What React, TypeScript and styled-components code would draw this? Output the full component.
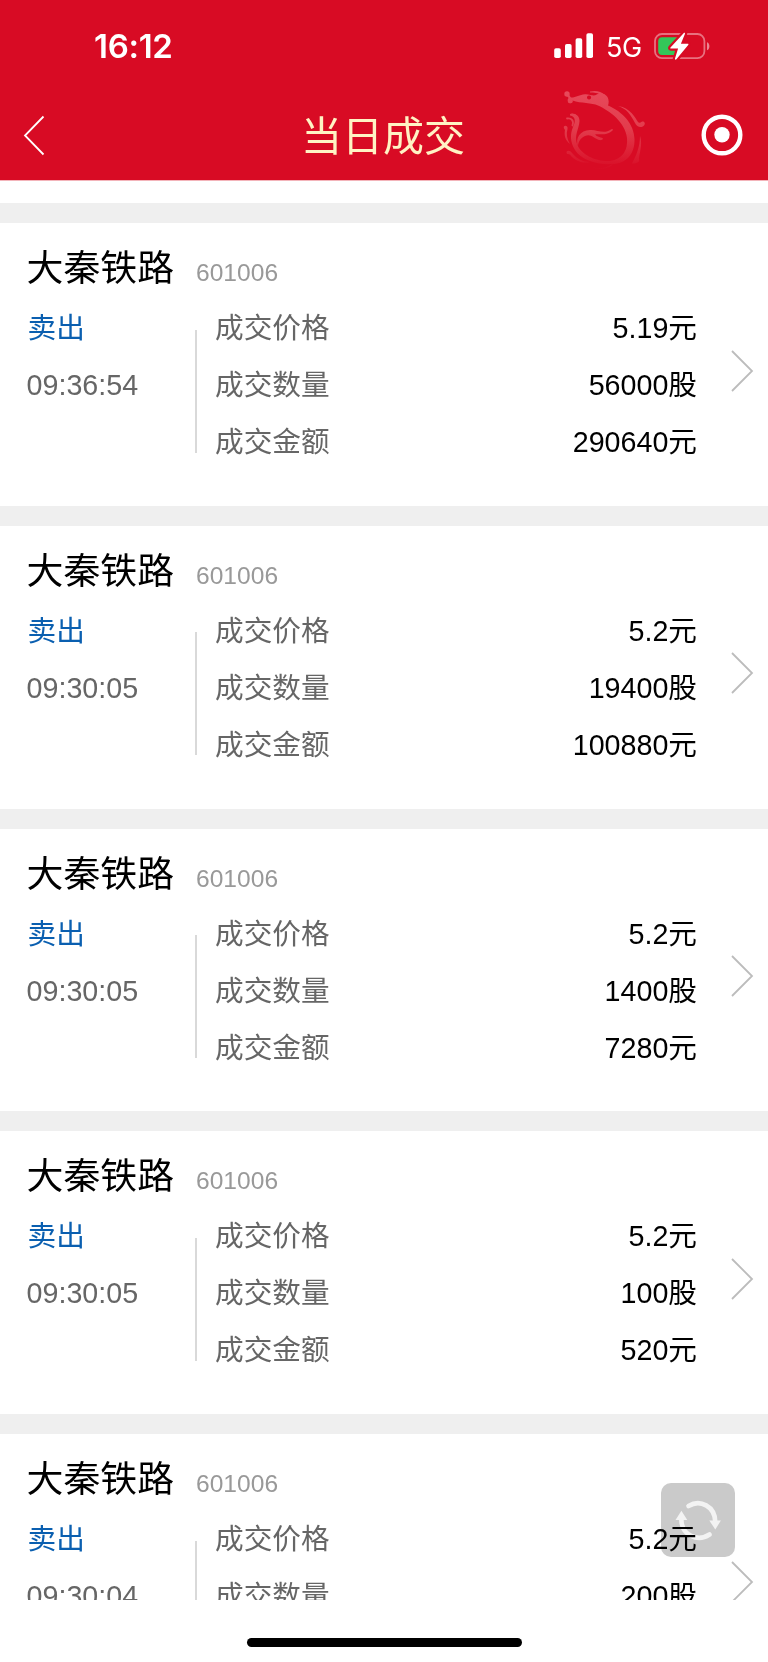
import { createGlobalStyle, styled } from "styled-components";

type Trade = {
  id: number;
  name: string;
  code: string;
  side: string;
  time: string;
  price: string;
  quantity: string;
  amount: string;
};

const stock = { name: "大秦铁路", code: "601006", side: "卖出" };

const trades: Trade[] = [
  { id: 1, ...stock, time: "09:36:54", price: "5.19", quantity: "56000", amount: "290640" },
  { id: 2, ...stock, time: "09:30:05", price: "5.2", quantity: "19400", amount: "100880" },
  { id: 3, ...stock, time: "09:30:05", price: "5.2", quantity: "1400", amount: "7280" },
  { id: 4, ...stock, time: "09:30:05", price: "5.2", quantity: "100", amount: "520" },
  { id: 5, ...stock, time: "09:30:04", price: "5.2", quantity: "200", amount: "1040" },
];

function StatusIcons() {
  return (
    <StatusRight>
      <svg width="40" height="26" viewBox="0 0 40 26" fill="#fff">
        <rect x="0.2" y="15.2" width="6.6" height="9.8" rx="1.8" />
        <rect x="11" y="11" width="6.6" height="14" rx="1.8" />
        <rect x="21.6" y="5.2" width="6.6" height="19.8" rx="1.8" />
        <rect x="32.4" y="0.2" width="6.6" height="24.8" rx="1.8" />
      </svg>
      <Network>5G</Network>
      <svg width="57" height="30" viewBox="0 0 57 30">
        <rect x="1" y="3" width="49.4" height="24.2" rx="7" fill="none" stroke="#fff" strokeOpacity="0.42" strokeWidth="1.8" />
        <path d="M53 11.2c3.2 1 3.2 7 0 8z" fill="#fff" fillOpacity="0.5" />
        <path d="M8.2 6.2H25V24H8.2a4 4 0 0 1-4-4v-9.8a4 4 0 0 1 4-4z" fill="#34c759" />
        <path
          d="M29.6 2.2 16.5 16.5c-.5.6-.2 1 .4 1h7.2L21 27.6c-.3 1 .7 1.4 1.4.7l11.8-14.4c.5-.6.2-1.2-.5-1.2h-6.8l4-9.8c.4-1-.6-1.500-1.300-.7z"
          fill="#fff"
          stroke="#d80b24"
          strokeWidth="4.4"
          paintOrder="stroke"
        />
      </svg>
    </StatusRight>
  );
}

function Dragon() {
  return (
    <DragonArt viewBox="0 0 110 95">
      <defs>
        <linearGradient id="fade" gradientUnits="userSpaceOnUse" x1="0" y1="8" x2="0" y2="90">
          <stop offset="0" stopColor="#e84a5c" />
          <stop offset="0.5" stopColor="#e23c4c" />
          <stop offset="1" stopColor="#d80b24" />
        </linearGradient>
      </defs>
      <g fill="url(#fade)">
        {/* head and spine */}
        <path
          fillRule="evenodd"
          d="M20 17.5C26 18 29 14.500 35 14.200C40 14 43 16.500 46 15C49 12.500 55 13 57.500 17C59 20 59 23 58 25.500C73 32 84 44 84.500 59C85 74 76 84 62 84C47 85 31 80 25 70C20 62 20 54 23 47C25.500 42 26 36.500 20 35.500L20 34C26 33 29.500 36 29.500 41C29 49 24 55 27 64C31 75 47 82 60 81C73 79 78 70 77 58C75 42 60 31 48 25.500C42 22.500 31 23.500 22.500 20.500C24 23 19 25 18 21C17 19 19 17.500 20 17.500ZM39 15.500a2.100 2 0 1 0 .1 0Z"
        />
        <circle cx="17" cy="14" r="2.700" />
        <path d="M16 14.500L18.500 14L21.500 18.500L20 20Z" />
        <circle cx="20" cy="21" r="2.300" />
        <path d="M40 11.500C46 10 51 11.500 55 15L52 16C48 12.500 44 12.500 40 12.500Z" />
        {/* mane */}
        <path d="M68 26C81 28 85 38 88 42C89 43.500 91 42.500 92 41.500C95 41 95.500 44 94 45.500C91 48.500 87 47 85 43C80 34 77 29 68 26Z" />
        {/* wing */}
        <path d="M28 67C25 58 30 50.500 40 50C47 49.500 54 54.500 61 49.500Q62.500 48.500 63 50C57 56.500 49 53.500 45 54.500C47 57 50 57 52.500 58C54 59.500 51 60.500 49 60C43 58 41 53.500 35 56C29.500 58.500 28 63 28 67Z" />
        {/* claws and tail */}
        <path d="M14 48.500C12.500 44.500 18.500 45 17.500 49C16 54 17 59 20 64C15 60 14 55 15 50Z" />
        <path d="M17 74C15 70 20 70 22 73C27 79 33 82 40 82C31 84 25 80 21 76C20 74 18 74 17 74Z" />
        <path d="M90 56C93 65 89 74 89 79C90 81 88 84 82 83.500C86 76 90 67 90 56Z" />
        <path d="M42 87C50 90 57 87 63 84C59 89 49 91 42 87Z" />
      </g>
      <g fill="none" stroke="url(#fade)" strokeWidth="1.8" strokeLinecap="round">
        <path d="M17 38.500c5-.5 7 2.500 5.500 7" />
        <path d="M22 34.500c4 0 6 3 5.500 7" />
      </g>
    </DragonArt>
  );
}

function TradeCard({ trade }: { trade: Trade }) {
  return (
    <Card>
      <CardTitle>
        <StockName>{trade.name}</StockName>
        <StockCode>{trade.code}</StockCode>
      </CardTitle>
      <CardBody>
        <SideColumn>
          <SideLabel>{trade.side}</SideLabel>
          <Time>{trade.time}</Time>
        </SideColumn>
        <Divider />
        <Details>
          <DetailRow>
            <DetailLabel>成交价格</DetailLabel>
            <DetailValue>{trade.price}元</DetailValue>
          </DetailRow>
          <DetailRow>
            <DetailLabel>成交数量</DetailLabel>
            <DetailValue>{trade.quantity}股</DetailValue>
          </DetailRow>
          <DetailRow>
            <DetailLabel>成交金额</DetailLabel>
            <DetailValue>{trade.amount}元</DetailValue>
          </DetailRow>
        </Details>
        <Arrow width="24" height="44" viewBox="0 0 24 44">
          <path d="M2 2l20 20L2 42" fill="none" stroke="#bcbcbc" strokeWidth="1.8" />
        </Arrow>
      </CardBody>
    </Card>
  );
}

export default function App() {
  return (
    <Screen>
      <GlobalStyle />
      <Header>
        <StatusBar>
          <Clock>16:12</Clock>
          <StatusIcons />
        </StatusBar>
        <NavBar>
          <BackButton aria-label="返回">
            <svg width="22" height="42" viewBox="0 0 22 42">
              <path d="M20.500 1.500 2 20.500l18.500 19" fill="none" stroke="#fff" strokeWidth="1.8" />
            </svg>
          </BackButton>
          <Title>当日成交</Title>
          <NavRight>
            <Dragon />
            <svg width="42" height="44" viewBox="0 0 42 44">
              <circle cx="21" cy="21" r="18.300" fill="none" stroke="#fff" strokeWidth="4.4" />
              <circle cx="21" cy="20.700" r="7.700" fill="#fff" />
            </svg>
          </NavRight>
        </NavBar>
      </Header>
      <TradeList>
        {trades.map((trade) => (
          <TradeCard key={trade.id} trade={trade} />
        ))}
      </TradeList>
      <Footer>
        <HomeIndicator />
      </Footer>
      <RefreshButton aria-label="刷新">
        <svg width="74" height="74" viewBox="0 0 74 74">
          <g fill="none" stroke="#f3f3f3" strokeWidth="4.6" strokeLinecap="round">
            <path d="M27.500 23C39 16 54 23 54.300 39" />
            <path d="M48.500 51.500C37 59 20.500 53 20.300 36" />
          </g>
          <path d="M48.300 37.500h11.600l-5.600 9zM14.500 37h11.800l-5.900-9.200z" fill="#f3f3f3" />
        </svg>
      </RefreshButton>
    </Screen>
  );
}

// Styled-components
const GlobalStyle = createGlobalStyle`
  * {
    box-sizing: border-box;
  }

  body {
    margin: 0;
    background: #fff;
    font-family: "Liberation Sans", "Noto Sans CJK SC", sans-serif;
  }

  svg {
    display: block;
    flex: none;
  }
`;

const Screen = styled.div`
  position: relative;
  display: flex;
  flex-direction: column;
  width: 768px;
  height: 1662px;
  overflow: hidden;
  background: #fff;
`;

const Header = styled.header`
  flex: none;
  height: 180px;
  background: #d80b24;
  box-shadow: 0 1px 0 #f3b4ba;
`;

const StatusBar = styled.div`
  display: flex;
  align-items: center;
  justify-content: space-between;
  height: 92px;
  padding: 0 57px 0 94px;
  color: #fff;
`;

const Clock = styled.span`
  font-family: Inter, sans-serif;
  font-size: 33px;
  font-weight: 600;
  letter-spacing: -0.3px;
`;

const StatusRight = styled.div`
  display: flex;
  align-items: center;
`;

const Network = styled.span`
  width: 48px;
  margin-left: 12px;
  padding-top: 2px;
  font-family: Inter, sans-serif;
  font-size: 27px;
  letter-spacing: -0.3px;
`;

const NavBar = styled.div`
  display: grid;
  grid-template-columns: 1fr auto 1fr;
  align-items: center;
  height: 88px;
  padding: 0 25px 0 23px;
`;

const BackButton = styled.button`
  justify-self: start;
  padding: 0;
  border: none;
  background: none;
`;

const Title = styled.h1`
  margin: 0;
  padding-top: 2px;
  font-size: 40.96px;
  font-weight: 400;
  line-height: 60px;
  color: #fff3c4;
`;

const NavRight = styled.div`
  display: flex;
  align-items: center;
  justify-content: flex-end;
  gap: 41px;
`;

const DragonArt = styled.svg`
  width: 110px;
  height: 95px;
  margin: -34px 0 -17px;
`;

const TradeList = styled.main`
  flex: none;
  height: 1420px;
  padding-top: 23px;
  overflow: hidden;
`;

const Card = styled.article`
  height: 302.75px;
  border-top: 20px solid #efefef;
  background: #fff;
`;

const CardTitle = styled.div`
  display: flex;
  align-items: baseline;
  height: 77px;
  padding: 16px 0 0 26.6px;
  line-height: 60px;
`;

const StockName = styled.h2`
  margin: 0;
  font-size: 36.86px;
  font-weight: 400;
  color: #000;
`;

const StockCode = styled.span`
  margin-left: 22px;
  font-size: 24.58px;
  color: #999;
`;

const CardBody = styled.div`
  display: flex;
  padding-left: 26.6px;
  font-size: 28.67px;
  line-height: 57.1px;
`;

const SideColumn = styled.div`
  width: 168.4px;
`;

const SideLabel = styled.div`
  padding-left: 1px;
  color: #0a5fb0;
`;

const Time = styled.div`
  color: #666;
`;

const Divider = styled.div`
  flex: none;
  width: 2px;
  height: 123px;
  margin-top: 29.5px;
  background: #d9d9d9;
`;

const Details = styled.div`
  width: 482px;
  margin-left: 18px;
`;

const DetailRow = styled.div`
  display: flex;
  justify-content: space-between;
`;

const DetailLabel = styled.span`
  color: #666;
`;

const DetailValue = styled.span`
  color: #000;
`;

const Arrow = styled.svg`
  margin: 48.5px 0 0 33px;
`;

const Footer = styled.footer`
  display: flex;
  flex: 1;
  justify-content: center;
  padding-top: 38px;
`;

const HomeIndicator = styled.div`
  width: 275px;
  height: 9px;
  border-radius: 5px;
  background: #000;
`;

const RefreshButton = styled.button`
  position: absolute;
  right: 33px;
  bottom: 105px;
  width: 74px;
  height: 74px;
  padding: 0;
  border: none;
  border-radius: 10px;
  background: #cacaca;
  mix-blend-mode: multiply;
`;
